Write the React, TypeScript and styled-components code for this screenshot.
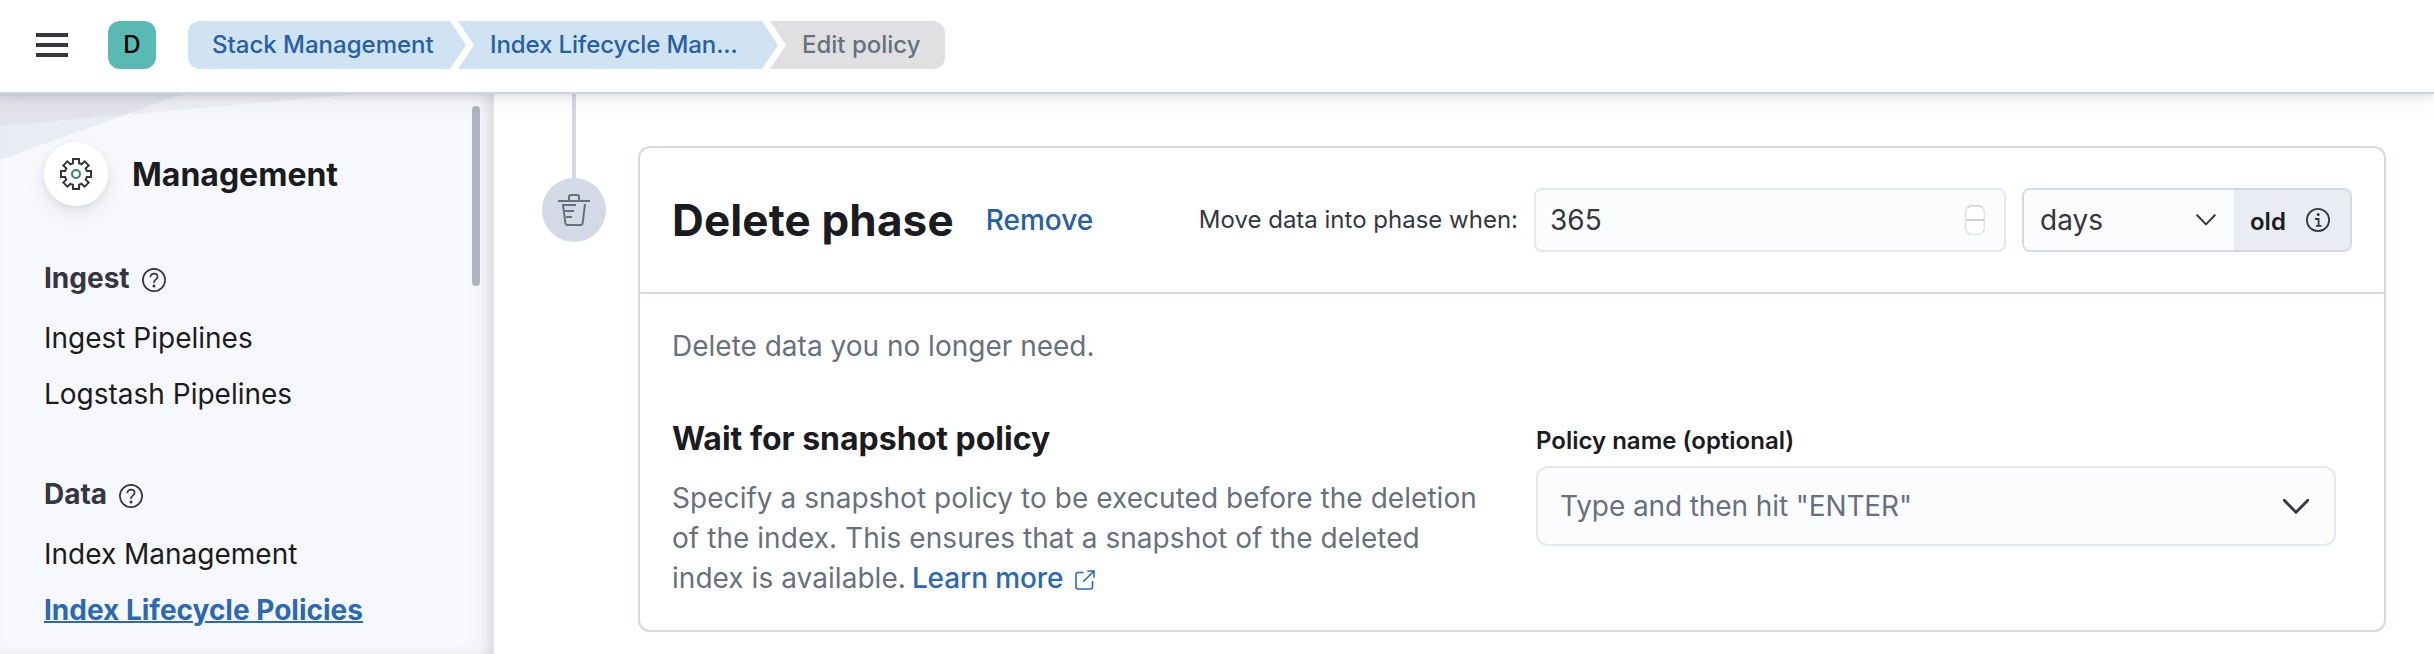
import React from "react";
import styled, { createGlobalStyle } from "styled-components";

const GlobalStyle = createGlobalStyle`
  * { box-sizing: border-box; }
  html, body { margin: 0; padding: 0; background: #fff; }
  body { overflow: hidden; }
  #root { font-family: Inter, "Liberation Sans", sans-serif; font-size: 28px; color: #343741; }
`;

const Page = styled.div`
  display: flex;
  flex-direction: column;
  height: 654px;
  overflow: hidden;
`;

const Header = styled.header`
  position: relative;
  z-index: 2;
  flex: none;
  display: flex;
  align-items: center;
  height: 94px;
  padding: 0 36px 2px;
  background: #fff;
  border-bottom: 2px solid #ced3df;
  box-shadow: 0 1.4px 2.8px rgba(0, 0, 0, 0.07), 0 3.8px 8px rgba(0, 0, 0, 0.05), 0 9px 20px rgba(0, 0, 0, 0.05);
`;

const MenuButton = styled.button`
  display: flex;
  flex-direction: column;
  gap: 6px;
  width: 32px;
  padding: 0;
  border: 0;
  background: none;
`;

const MenuBar = styled.span`
  height: 4px;
  background: #343741;
`;

const SpaceAvatar = styled.div`
  width: 48px;
  height: 48px;
  margin: 0 32px 0 40px;
  border-radius: 12px;
  background: #58bab3;
  color: #000;
  font-size: 24px;
  font-weight: 500;
  line-height: 48px;
  text-align: center;
`;

const Breadcrumbs = styled.nav`
  display: flex;
`;

const Crumb = styled.span<{ $kind: "first" | "middle" | "last"; $width: number }>`
  flex: none;
  width: ${(p) => p.$width}px;
  height: 48px;
  margin-right: -8px;
  padding-left: ${(p) => (p.$kind === "first" ? 24 : 32)}px;
  font-size: 24px;
  font-weight: 500;
  letter-spacing: ${(p) => (p.$kind === "middle" ? "-0.12px" : "0")};
  line-height: 48px;
  white-space: nowrap;
  color: ${(p) => (p.$kind === "last" ? "#69707d" : "#2560a6")};
  background: ${(p) => (p.$kind === "last" ? "#e0e0e3" : "#d0e3f2")};
  border-radius: ${(p) => (p.$kind === "first" ? "12px 0 0 12px" : p.$kind === "last" ? "0 12px 12px 0" : "0")};
  clip-path: ${(p) =>
    p.$kind === "first"
      ? "polygon(0 0, calc(100% - 16px) 0, 100% 50%, calc(100% - 16px) 100%, 0 100%)"
      : p.$kind === "middle"
        ? "polygon(0 0, calc(100% - 16px) 0, 100% 50%, calc(100% - 16px) 100%, 0 100%, 16px 50%)"
        : "polygon(0 0, 100% 0, 100% 100%, 0 100%, 16px 50%)"};
`;

const Body = styled.div`
  flex: 1;
  display: flex;
  min-height: 0;
`;

const Sidebar = styled.aside`
  position: relative;
  flex: none;
  width: 494px;
  padding: 48px 0 0 44px;
  background: #f7f8fc;
  border-right: 2px solid #dfe2ea;
  box-shadow: inset -6px 0 12px -4px rgba(30, 35, 50, 0.13), inset -14px 0 24px -10px rgba(30, 35, 50, 0.05);
`;

const SidebarPattern = styled.svg`
  position: absolute;
  left: 0;
  top: 0;
`;

const ScrollThumb = styled.div`
  position: absolute;
  right: 12px;
  top: 12px;
  width: 8px;
  height: 180px;
  border-radius: 4px;
  background: #b1b4bd;
`;

const SolutionTitle = styled.div`
  position: relative;
  display: flex;
  align-items: center;
  gap: 24px;
  height: 64px;
  color: #1a1c21;
  font-size: 32px;
  font-weight: 700;
`;

const SolutionIcon = styled.div`
  display: flex;
  align-items: center;
  justify-content: center;
  width: 64px;
  height: 64px;
  border-radius: 50%;
  background: #fff;
  box-shadow: 0 2px 8px -1px rgba(0, 0, 0, 0.08), 0 5px 16px -1px rgba(0, 0, 0, 0.05), 0 12px 26px -1px rgba(0, 0, 0, 0.04);
`;

const NavGroup = styled.section`
  display: flex;
  flex-direction: column;
  margin-top: 48px;
`;

const NavHeading = styled.h3`
  display: flex;
  align-items: center;
  gap: 12px;
  height: 48px;
  margin: 0 0 8px;
  font-size: 28px;
  font-weight: 700;
  line-height: 48px;
  color: #343741;
  svg { margin-top: 4px; }
`;

const NavLink = styled.a<{ $active?: boolean }>`
  height: 56px;
  font-size: 28px;
  line-height: 56px;
  color: ${(p) => (p.$active ? "#2b69b6" : "#1a1c21")};
  font-weight: ${(p) => (p.$active ? 700 : 400)};
  text-decoration: ${(p) => (p.$active ? "underline 2px" : "none")};
`;

const Main = styled.main`
  flex: 1;
  display: flex;
  align-items: flex-start;
  padding-left: 48px;
`;

const Timeline = styled.div`
  display: flex;
  flex-direction: column;
  align-items: center;
  width: 64px;
  margin-right: 32px;
`;

const TimelineLine = styled.div`
  width: 4px;
  height: 84px;
  background: #d3dae6;
`;

const PhaseBadge = styled.div`
  display: flex;
  align-items: center;
  justify-content: center;
  width: 64px;
  height: 64px;
  border-radius: 50%;
  background: #d3d9e5;
`;

const PhasePanel = styled.section`
  width: 1748px;
  height: 486px;
  margin-top: 52px;
  border: 2px solid #d4d9e6;
  border-radius: 12px;
  background: #fff;
`;

const PhaseHeader = styled.div`
  display: flex;
  align-items: center;
  height: 146px;
  padding: 0 32px;
  border-bottom: 2px solid #d4d9e6;
`;

const PhaseTitle = styled.h2`
  margin: 0;
  font-size: 44px;
  font-weight: 700;
  letter-spacing: 0.15px;
  line-height: 64px;
  color: #1a1c21;
`;

const RemoveButton = styled.button`
  margin: 0 auto 0 32px;
  padding: 0;
  border: 0;
  background: none;
  font: 500 28px/48px Inter, "Liberation Sans", sans-serif;
  color: #2560a6;
`;

const TimingLabel = styled.label`
  font-size: 24px;
  line-height: 36px;
  color: #343741;
`;

const NumberField = styled.div`
  display: flex;
  align-items: center;
  justify-content: space-between;
  width: 472px;
  height: 64px;
  margin: 0 16px;
  padding: 0 19px 0 14px;
  border: 2px solid #e5e8f2;
  border-radius: 8px;
  background: #fbfcfe;
  line-height: 60px;
`;

const UnitGroup = styled.div`
  display: flex;
  width: 330px;
  height: 64px;
  border: 2px solid #d4d9e6;
  border-radius: 8px;
  overflow: hidden;
`;

const UnitSelect = styled.div`
  display: flex;
  align-items: center;
  justify-content: space-between;
  width: 210px;
  padding: 0 18px 0 16px;
  background: #fbfcfe;
`;

const UnitAppend = styled.div`
  flex: 1;
  display: flex;
  align-items: center;
  justify-content: space-between;
  padding: 0 20px 0 16px;
  background: #e9ecf2;
`;

const AppendLabel = styled.span`
  padding-top: 2px;
  color: #1a1c21;
  font-size: 24px;
  font-weight: 600;
`;

const PhaseBody = styled.div`
  padding: 32px;
`;

const PhaseDescription = styled.p`
  margin: 0;
  line-height: 40px;
  color: #69707d;
`;

const SettingRow = styled.div`
  display: flex;
  margin-top: 49px;
`;

const SettingCopy = styled.div`
  width: 864px;
`;

const SettingTitle = styled.h3`
  margin: 0 0 15px;
  font-size: 32px;
  font-weight: 700;
  line-height: 48px;
  color: #1a1c21;
`;

const SettingText = styled.p`
  width: 830px;
  margin: 0;
  letter-spacing: 0.05px;
  line-height: 40px;
  white-space: nowrap;
  color: #69707d;
`;

const DocsLink = styled.a`
  margin-left: -2px;
  font-weight: 500;
  letter-spacing: -0.1px;
  color: #2b69b6;
  svg { margin-left: 12px; vertical-align: -2px; }
`;

const SettingField = styled.div`
  display: flex;
  flex-direction: column;
  width: 800px;
`;

const FieldLabel = styled.label`
  margin: 8px 0 7px;
  font-size: 24px;
  font-weight: 600;
  line-height: 36px;
  color: #1a1c21;
`;

const ComboBox = styled.div`
  display: flex;
  align-items: center;
  justify-content: space-between;
  height: 80px;
  padding: 0 25px 0 22px;
  border: 2px solid #e5e8f2;
  border-radius: 12px;
  background: #fbfcfe;
  letter-spacing: -0.1px;
  color: #69707d;
`;

const GearIcon = () => (
  <svg width="32" height="32" viewBox="0 0 32 32" fill="none" strokeWidth="2">
    <path
      stroke="#343741"
      d="M13 1h6v4.200q1.800 .4 2.600 1.100l3-3 4.100 4.100-3 3q.8 1.300 1.100 2.600H31v6h-4.200q-.4 1.600-1.100 2.600l3 3-4.100 4.100-3-3q-1.300 .8-2.600 1.100V31h-6v-4.200q-1.600-.4-2.600-1.100l-3 3-4.100-4.100 3-3q-.8-1.300-1.100-2.600H1v-6h4.200q.4-1.600 1.100-2.600l-3-3 4.100-4.100 3 3q1.300-.8 2.600-1.100z"
    />
    <circle cx="16" cy="16" r="4" stroke="#387f77" />
  </svg>
);

const HelpIcon = () => (
  <svg width="24" height="24" viewBox="0 0 24 24" fill="none" stroke="#343741" strokeWidth="1.7">
    <circle cx="12" cy="12" r="11.1" />
    <path d="M8.400 9.200c0-2.200 1.400-3.600 3.600-3.600s3.600 1.300 3.600 3.200c0 2.600-3.600 2.900-3.600 5.400v.8" />
    <circle cx="12" cy="18" r="1.500" fill="#343741" stroke="none" />
  </svg>
);

const InfoIcon = () => (
  <svg width="24" height="24" viewBox="0 0 24 24" fill="none" stroke="#343741" strokeWidth="1.8">
    <circle cx="12" cy="12" r="11.1" />
    <path d="M9 11h3.600v6.800M10 17.900h5.600" />
    <circle cx="12.200" cy="6.500" r="1.500" fill="#343741" stroke="none" />
  </svg>
);

const TrashIcon = () => (
  <svg width="32" height="32" viewBox="0 0 32 32" fill="none" stroke="#69707d" strokeWidth="2">
    <path d="M0 7h32M11 7V3a2 2 0 0 1 2-2h6a2 2 0 0 1 2 2v4" />
    <path d="M18 11H5l2.400 18.300A2 2 0 0 0 9.400 31h13.200a2 2 0 0 0 2-1.700L27 10M7 17h9M8 23h6" />
  </svg>
);

const ChevronIcon = ({ width, height, stroke }: { width: number; height: number; stroke: number }) => (
  <svg width={width} height={height} viewBox={`0 0 ${width} ${height}`} fill="none">
    <path
      d={`M1.2 1.2 L${width / 2} ${height - 1.6} L${width - 1.2} 1.2`}
      stroke="#343741"
      strokeWidth={stroke}
      strokeLinecap="round"
      strokeLinejoin="round"
    />
  </svg>
);

const StepperIcon = () => (
  <svg width="20" height="30" viewBox="0 0 20 30" fill="none">
    <rect x="0.75" y="0.75" width="18.500" height="28.500" rx="6" fill="#fff" stroke="#dcdcdd" strokeWidth="1.2" />
    <path d="M3 2.500Q4.500 .8 7 .8H13Q15.500 .8 17 2.500" stroke="#cfcfd1" strokeWidth="1.2" />
    <path d="M1 15h18" stroke="#cfcfd1" strokeWidth="2" />
  </svg>
);

const ExternalIcon = () => (
  <svg width="20" height="20" viewBox="0 0 20 20" fill="none" stroke="#2b69b6" strokeWidth="1.6">
    <path d="M8.500 2.500H3a2 2 0 0 0-2 2V17a2 2 0 0 0 2 2h12.500a2 2 0 0 0 2-2v-6M12.300 1H19v6.500M19 1L8.200 11.800" />
  </svg>
);

export default function App() {
  return (
    <>
      <GlobalStyle />
      <Page>
        <Header>
          <MenuButton aria-label="Menu">
            <MenuBar />
            <MenuBar />
            <MenuBar />
          </MenuButton>
          <SpaceAvatar>D</SpaceAvatar>
          <Breadcrumbs>
            <Crumb $kind="first" $width={278}>Stack Management</Crumb>
            <Crumb $kind="middle" $width={320}>Index Lifecycle Man...</Crumb>
            <Crumb $kind="last" $width={175}>Edit policy</Crumb>
          </Breadcrumbs>
        </Header>
        <Body>
          <Sidebar>
            <SidebarPattern width="400" height="70" viewBox="0 0 400 70">
              <path d="M0 0H358L0 32Z" fill="#605c70" fillOpacity="0.06" />
              <path d="M0 0H182L0 66Z" fill="#5f6890" fillOpacity="0.08" />
            </SidebarPattern>
            <ScrollThumb />
            <SolutionTitle>
              <SolutionIcon>
                <GearIcon />
              </SolutionIcon>
              Management
            </SolutionTitle>
            <NavGroup>
              <NavHeading>
                Ingest <HelpIcon />
              </NavHeading>
              <NavLink>Ingest Pipelines</NavLink>
              <NavLink>Logstash Pipelines</NavLink>
            </NavGroup>
            <NavGroup>
              <NavHeading>
                Data <HelpIcon />
              </NavHeading>
              <NavLink>Index Management</NavLink>
              <NavLink $active>Index Lifecycle Policies</NavLink>
            </NavGroup>
          </Sidebar>
          <Main>
            <Timeline>
              <TimelineLine />
              <PhaseBadge>
                <TrashIcon />
              </PhaseBadge>
            </Timeline>
            <PhasePanel>
              <PhaseHeader>
                <PhaseTitle>Delete phase</PhaseTitle>
                <RemoveButton>Remove</RemoveButton>
                <TimingLabel>Move data into phase when:</TimingLabel>
                <NumberField>
                  365
                  <StepperIcon />
                </NumberField>
                <UnitGroup>
                  <UnitSelect>
                    days
                    <ChevronIcon width={20} height={12} stroke={2} />
                  </UnitSelect>
                  <UnitAppend>
                    <AppendLabel>old</AppendLabel>
                    <InfoIcon />
                  </UnitAppend>
                </UnitGroup>
              </PhaseHeader>
              <PhaseBody>
                <PhaseDescription>Delete data you no longer need.</PhaseDescription>
                <SettingRow>
                  <SettingCopy>
                    <SettingTitle>Wait for snapshot policy</SettingTitle>
                    <SettingText>
                      Specify a snapshot policy to be executed before the deletion
                      <br />
                      of the index. This ensures that a snapshot of the deleted
                      <br />
                      index is available.{" "}
                      <DocsLink>
                        Learn more
                        <ExternalIcon />
                      </DocsLink>
                    </SettingText>
                  </SettingCopy>
                  <SettingField>
                    <FieldLabel>Policy name (optional)</FieldLabel>
                    <ComboBox>
                      Type and then hit "ENTER"
                      <ChevronIcon width={26} height={15} stroke={2.8} />
                    </ComboBox>
                  </SettingField>
                </SettingRow>
              </PhaseBody>
            </PhasePanel>
          </Main>
        </Body>
      </Page>
    </>
  );
}
